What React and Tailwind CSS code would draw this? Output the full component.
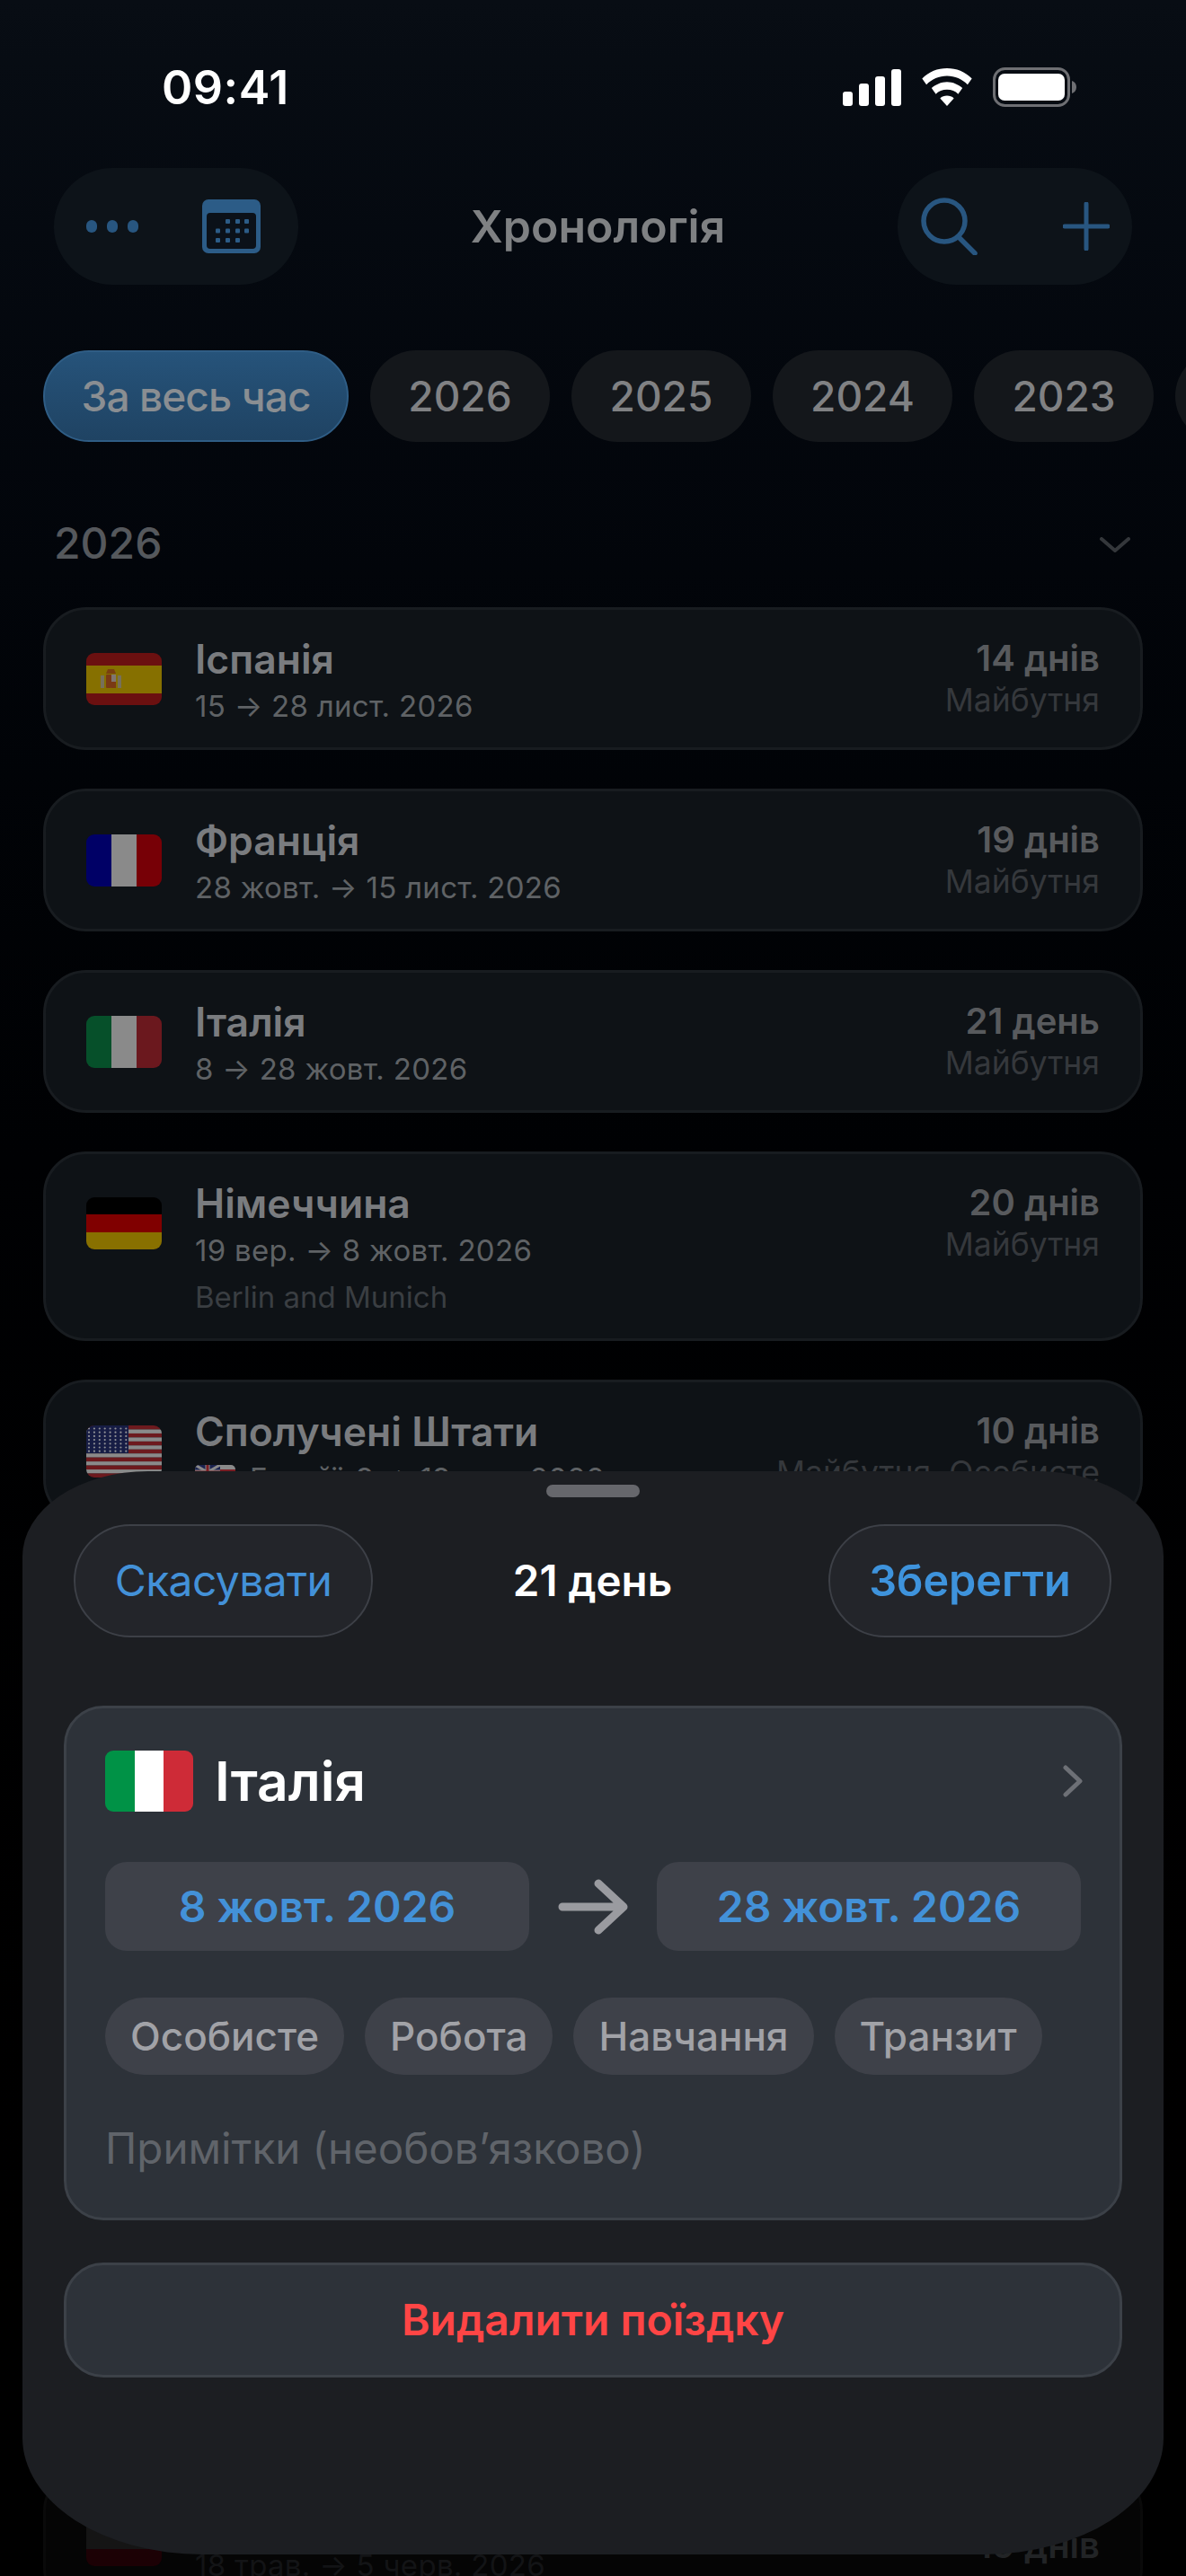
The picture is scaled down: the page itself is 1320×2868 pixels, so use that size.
import React from "react";

const font = { fontFamily: '"Inter","Liberation Sans",sans-serif' };

function Signal() {
  return (
    <svg width="65" height="41" viewBox="0 0 65 41" fill="#fff">
      <rect x="0" y="25" width="11" height="16" rx="3" />
      <rect x="18" y="16" width="11" height="25" rx="3" />
      <rect x="36" y="8" width="11" height="33" rx="3" />
      <rect x="54" y="0" width="11" height="41" rx="3" />
    </svg>
  );
}
function Wifi() {
  return (
    <svg width="58" height="42" viewBox="0 0 58 44" fill="#fff">
      <path d="M29 0C18 0 8 4 0 12l5 7c6-6 15-10 24-10s18 4 24 10l5-7C50 4 40 0 29 0Z" />
      <path d="M29 16c-7 0-13 3-18 7l5 7c3-3 8-5 13-5s10 2 13 5l5-7c-5-4-11-7-18-7Z" />
      <path d="M29 32c-3 0-6 1-8 3l8 9 8-9c-2-2-5-3-8-3Z" />
    </svg>
  );
}
function Battery() {
  return (
    <svg width="94" height="44" viewBox="0 0 94 44">
      <rect x="1.5" y="1.5" width="83" height="41" rx="12" fill="none" stroke="#6e6f73" strokeWidth="3" />
      <rect x="6" y="7" width="74" height="30" rx="7" fill="#fff" />
      <path d="M88 15c3 1 5 3.500 5 7s-2 6-5 7Z" fill="#6e6f73" />
    </svg>
  );
}
function CalendarIcon() {
  const dots = [
    [26, 0], [37, 0], [47, 0],
    [15, 1], [26, 1], [37, 1], [47, 1],
    [15, 2], [26, 2], [37, 2],
  ];
  return (
    <svg width="65" height="60" viewBox="0 0 65 60">
      <rect x="0" y="0" width="65" height="60" rx="7" fill="#2c5c87" />
      <rect x="5" y="15" width="55" height="40" rx="4" fill="#0b1119" />
      {dots.map(([x, r], i) => (
        <rect key={i} x={x} y={22 + r * 10.500} width="5" height="5" rx="1" fill="#2c5c87" />
      ))}
    </svg>
  );
}
function SearchIcon() {
  return (
    <svg width="64" height="64" viewBox="0 0 64 64" fill="none" stroke="#285680" strokeWidth="5.500" strokeLinecap="round">
      <circle cx="26" cy="26" r="23" />
      <path d="M42 44 L60 62" />
    </svg>
  );
}
function PlusIcon() {
  return (
    <svg width="52" height="54" viewBox="0 0 52 54" fill="none" stroke="#285680" strokeWidth="5" strokeLinecap="round">
      <path d="M26 2V52M2 27H50" />
    </svg>
  );
}
function SmallChevronDown() {
  return (
    <svg width="34" height="18" viewBox="0 0 34 18" fill="none" stroke="#34373b" strokeWidth="4" strokeLinecap="round" strokeLinejoin="round">
      <path d="M2 2 L17 15 L32 2" />
    </svg>
  );
}

function Stripes({ colors, dir = "row", className = "" }) {
  return (
    <div className={`flex ${dir === "row" ? "flex-row" : "flex-col"} overflow-hidden rounded-[9px] ${className}`}>
      {colors.map(([c, g], i) => (
        <div key={i} style={{ background: c, flexGrow: g }} className="basis-0" />
      ))}
    </div>
  );
}

function SpainFlag() {
  return (
    <div className="relative w-[84px] h-[58px] shrink-0 rounded-[9px] overflow-hidden flex flex-col">
      <div className="h-[14px] bg-[#6b1010]" />
      <div className="h-[31px] bg-[#867000]" />
      <div className="h-[13px] bg-[#6b1010]" />
      <svg className="absolute left-[15px] top-[17px]" width="25" height="26" viewBox="0 0 25 26">
        <rect x="7" y="7" width="6" height="15" rx="1" fill="#7a3a14" />
        <rect x="13" y="7" width="5" height="8" fill="#7f7570" />
        <rect x="13" y="15" width="5" height="7" fill="#7a3a14" />
        <path d="M9 1h7l2 5H7Z" fill="#7a4010" />
        <rect x="1" y="8" width="4" height="14" fill="#77705a" />
        <rect x="20" y="8" width="4" height="14" fill="#77705a" />
      </svg>
    </div>
  );
}
function UsFlag() {
  const stars = [];
  for (let r = 0; r < 7; r++) for (let c = 0; c < 8; c++) stars.push(<circle key={`${r}-${c}`} cx={3 + c * 5.900} cy={3.500 + r * 4.200} r="1.100" fill="#8f9096" />);
  return (
    <svg width="84" height="58" viewBox="0 0 84 58" className="shrink-0 rounded-[9px]">
      {Array.from({ length: 13 }).map((_, i) => (
        <rect key={i} x="0" y={i * 4.460} width="84" height="4.500" fill={i % 2 ? "#8a8a8a" : "#6d1a1e"} />
      ))}
      <rect x="0" y="0" width="47" height="31" fill="#171d45" />
      {stars}
    </svg>
  );
}
function CrestFlag() {
  return (
    <svg width="45" height="30" viewBox="0 0 45 30" className="shrink-0 rounded-[5px]">
      <rect width="45" height="5" fill="#8a8a8a" />
      <rect y="5" width="45" height="5" fill="#7a1e24" />
      <rect y="10" width="45" height="20" fill="#1b2350" />
      <rect width="28" height="16" fill="#1b2350" />
      <path d="M0 0L28 16M28 0L0 16" stroke="#8a8a8a" strokeWidth="3" />
      <path d="M14 0V16M0 8H28" stroke="#8a8a8a" strokeWidth="5" />
      <path d="M14 0V16M0 8H28" stroke="#7a1e24" strokeWidth="3" />
    </svg>
  );
}

function TripCard({ flag, name, dates, note, days, status, extraDate }) {
  return (
    <div className="flex items-start justify-between rounded-[48px] border-[3px] border-[#181c20] bg-[#0e1216] pl-[45px] pr-[45px] pt-[29px] pb-[23px]">
      <div className="flex items-start min-w-0">
        <div className="pt-[19px] w-[121px] shrink-0">{flag}</div>
        <div className="flex flex-col">
          <div className="text-[44.500px] leading-[52px] font-semibold text-[#7a7c7f] whitespace-nowrap">{name}</div>
          <div className="flex items-center gap-[16px] text-[33px] leading-[46px] text-[#5f6265] mt-[3px] tracking-[0.3px] whitespace-nowrap">
            {extraDate}
            <span>{dates}</span>
          </div>
          {note && <div className="text-[33px] leading-[46px] text-[#3a3e42] mt-[6px]">{note}</div>}
        </div>
      </div>
      <div className="flex flex-col items-end shrink-0">
        <div className="text-[40px] leading-[50px] font-semibold text-[#585a5d]">{days}</div>
        <div className="text-[35.500px] leading-[44px] text-[#35383c]">{status}</div>
      </div>
    </div>
  );
}

function YearPill({ label, active }) {
  return (
    <div
      className={
        active
          ? "h-[102px] w-[340px] shrink-0 flex items-center justify-center rounded-[51px] border-[2px] border-[#2f5d85] bg-gradient-to-b from-[#26537a] to-[#1f4363] text-[46px] font-medium tracking-[-0.9px] text-[#8a8e92]"
          : "h-[102px] w-[200px] shrink-0 flex items-center justify-center rounded-[51px] bg-[#14171b] text-[46px] font-medium text-[#808183]"
      }
    >
      {label}
    </div>
  );
}

function Tag({ label }) {
  return (
    <div className="h-[86px] flex items-center rounded-[43px] bg-[#3e4149] px-[28px] text-[44px] font-medium text-[#a1a2a7]">
      {label}
    </div>
  );
}

function DateField({ label }) {
  return (
    <div className="flex-1 h-[99px] flex items-center justify-center rounded-[24px] bg-[#3e4149] text-[48px] font-semibold text-[#4391d8]">
      {label}
    </div>
  );
}

export default function App() {
  return (
    <div style={font} className="relative w-[1320px] h-[2868px] overflow-hidden bg-gradient-to-b from-[#080d14] via-[#000103] via-45% to-[#000000]">
      {/* status bar */}
      <div className="flex items-start justify-between h-[187px] pl-[180px] pr-[121px] pt-[65px]">
        <div className="text-[52px] leading-[66px] font-semibold text-white tracking-[0.5px]">09:41</div>
        <div className="flex items-center gap-[22px] pt-[10px]">
          <Signal />
          <Wifi />
          <Battery />
        </div>
      </div>

      {/* nav */}
      <div className="flex items-center justify-between h-[130px] pl-[60px] pr-[60px]">
        <div className="flex items-center w-[272px] h-[130px] rounded-[65px] bg-[#0d1319] pl-[36px] gap-[71px]">
          <div className="flex gap-[11px]">
            <div className="w-[12px] h-[14px] rounded-full bg-[#285680]" />
            <div className="w-[12px] h-[14px] rounded-full bg-[#285680]" />
            <div className="w-[12px] h-[14px] rounded-full bg-[#285680]" />
          </div>
          <CalendarIcon />
        </div>
        <div className="text-[50px] font-semibold text-[#7f8183]">Хронологія</div>
        <div className="flex items-center justify-between w-[261px] h-[130px] rounded-[65px] bg-[#0d1319] pl-[26px] pr-[25px]">
          <SearchIcon />
          <PlusIcon />
        </div>
      </div>

      {/* filters */}
      <div className="flex gap-[24px] pl-[48px] mt-[73px] w-[1500px]">
        <YearPill label="За весь час" active />
        <YearPill label="2026" />
        <YearPill label="2025" />
        <YearPill label="2024" />
        <YearPill label="2023" />
        <YearPill label="" />
      </div>

      {/* year head */}
      <div className="flex items-center justify-between pl-[60px] pr-[62px] mt-[84px] h-[58px]">
        <div className="text-[48px] font-medium text-[#55585c]">2026</div>
        <div className="pt-[4px]">
          <SmallChevronDown />
        </div>
      </div>

      {/* list */}
      <div className="flex flex-col gap-[43px] px-[48px] mt-[42px]">
        <TripCard flag={<SpainFlag />} name="Іспанія" dates="15 → 28 лист. 2026" days="14 днів" status="Майбутня" />
        <TripCard
          flag={<Stripes className="w-[84px] h-[58px]" colors={[["#000066", 1], ["#8a8a8a", 1], ["#770006", 1]]} />}
          name="Франція"
          dates="28 жовт. → 15 лист. 2026"
          days="19 днів"
          status="Майбутня"
        />
        <TripCard
          flag={<Stripes className="w-[84px] h-[58px]" colors={[["#06502a", 1], ["#8a8a8a", 1], ["#6b181e", 1]]} />}
          name="Італія"
          dates="8 → 28 жовт. 2026"
          days="21 день"
          status="Майбутня"
        />
        <TripCard
          flag={<Stripes dir="col" className="w-[84px] h-[58px]" colors={[["#000000", 1], ["#800000", 1], ["#887000", 1]]} />}
          name="Німеччина"
          dates="19 вер. → 8 жовт. 2026"
          note="Berlin and Munich"
          days="20 днів"
          status="Майбутня"
        />
        <TripCard
          flag={<UsFlag />}
          name="Сполучені Штати"
          extraDate={<><CrestFlag /><span>Гавайї</span></>}
          dates="9 → 19 вер. 2026"
          days="10 днів"
          status="Майбутня, Особисте"
        />

        {/* the next card sits almost wholly under the sheet and fades to black */}
        <div className="mt-[1010px] h-[159px] flex items-start justify-between rounded-[48px] border-[3px] border-[#0a0a0a] bg-[#050505] pl-[45px] pr-[45px]">
          <div className="flex items-start">
            <div className="pt-[48px] w-[121px] shrink-0">
              <Stripes dir="col" className="w-[84px] h-[58px]" colors={[["#151515", 2], ["#1c0105", 1]]} />
            </div>
            <div className="pt-[82px] text-[33px] leading-[46px] text-[#131416] tracking-[0.3px]">18 трав. → 5 черв. 2026</div>
          </div>
          <div className="pt-[57px] text-[40px] leading-[52px] font-semibold text-[#222426]">19 днів</div>
        </div>
      </div>

      {/* sheet */}
      <div className="absolute left-[25px] top-[1638px] w-[1270px] h-[1206px] rounded-tl-[140px_95px] rounded-tr-[140px_95px] rounded-bl-[200px_130px] rounded-br-[200px_130px] bg-[#1c1e22]">
        <div className="flex justify-center pt-[15px]">
          <div className="w-[104px] h-[14px] rounded-full bg-[#66676c]" />
        </div>
        <div className="flex items-center justify-between pl-[57px] pr-[58px] mt-[30px]">
          <div className="flex items-center justify-center w-[333px] h-[126px] rounded-[63px] border-[2px] border-[#3d4047] bg-[#23252a] text-[48px] tracking-[-0.6px] text-[#4391d8]">
            Скасувати
          </div>
          <div className="-ml-[18px] text-[47.500px] font-semibold text-white">21 день</div>
          <div className="flex items-center justify-center w-[315px] h-[126px] rounded-[63px] border-[2px] border-[#3d4047] bg-[#23252a] text-[48.500px] font-semibold text-[#3e93dc]">
            Зберегти
          </div>
        </div>

        <div className="mx-[46px] mt-[76px] h-[573px] rounded-[44px] border-[3px] border-[#3c4148] bg-[#2d3239] pl-[43px] pr-[43px] pt-[47px]">
          <div className="flex items-center h-[68px]">
            <Stripes className="w-[98px] h-[68px]" colors={[["#009246", 1], ["#ffffff", 1], ["#ce2b37", 1]]} />
            <div className="ml-[24px] text-[60.500px] font-semibold text-white">Італія</div>
            <svg className="ml-auto -mr-[3px]" width="24" height="36" viewBox="0 0 24 36" fill="none" stroke="#6d7076" strokeWidth="5" strokeLinecap="round" strokeLinejoin="round">
              <path d="M4 3 L20 18 L4 33" />
            </svg>
          </div>
          <div className="flex items-center gap-[32px] mt-[56px]">
            <DateField label="8 жовт. 2026" />
            <svg width="78" height="62" viewBox="0 0 78 62" fill="none" stroke="#9a9ba0" strokeWidth="9" strokeLinecap="round" strokeLinejoin="round" className="shrink-0">
              <path d="M5 31H72M45 5L73 31L45 57" />
            </svg>
            <DateField label="28 жовт. 2026" />
          </div>
          <div className="flex gap-[23px] mt-[52px]">
            <Tag label="Особисте" />
            <Tag label="Робота" />
            <Tag label="Навчання" />
            <Tag label="Транзит" />
          </div>
          <div className="mt-[52px] text-[47.500px] leading-[60px] text-[#60646a]">Примітки (необовʼязково)</div>
        </div>

        <div className="mx-[46px] mt-[47px] h-[128px] flex items-center justify-center rounded-[44px] border-[3px] border-[#3c4148] bg-[#2d3239] text-[48px] font-semibold text-[#ff4545]">
          Видалити поїздку
        </div>
      </div>
    </div>
  );
}
